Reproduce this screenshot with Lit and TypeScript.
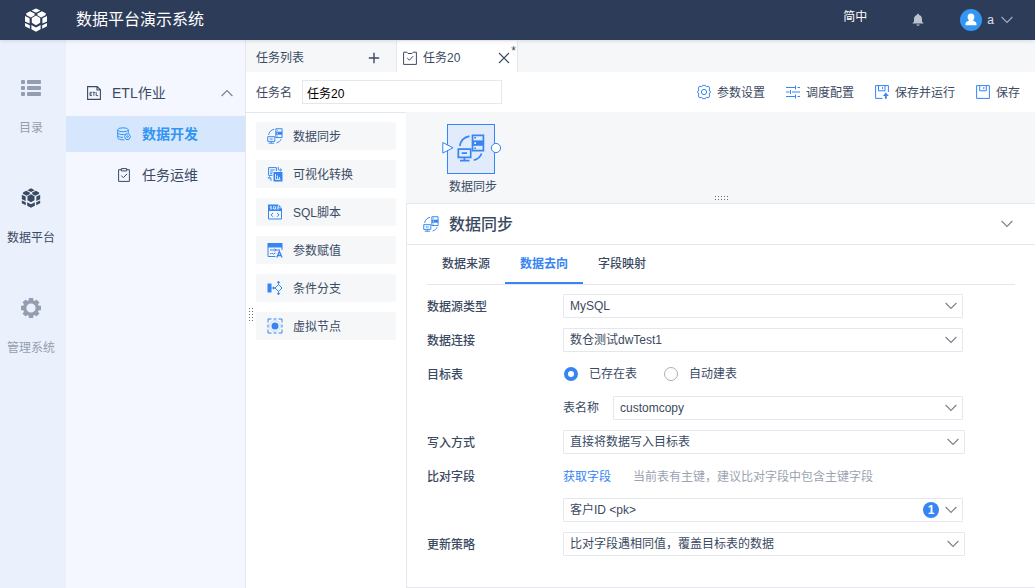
import { LitElement, html, css, svg, nothing, TemplateResult } from "lit";
import { customElement, property, state } from "lit/decorators.js";
import { classMap } from "lit/directives/class-map.js";

type Shape = { box: string; body: TemplateResult };

const cube = svg`
  <g fill="currentColor">
    <path d="M12 .4 16.4 2.6 12 4.8 7.6 2.6z"/>
    <path d="M6 3.2 10.6 5.4 10.6 7.2 7 9.4 2.6 7.2 2 5.6z"/>
    <path d="M18 3.2 13.4 5.4 13.4 7.2 17 9.4 21.4 7.2 22 5.6z"/>
    <path d="M12 7.6 16.2 10v4.8L12 17.2 7.8 14.8V10z"/>
    <path d="M1 8 5.6 10.2v5.4L1 13.4z"/>
    <path d="M23 8 18.4 10.2v5.4L23 13.4z"/>
    <path d="M1 15 5.8 17.2v3.6L1 18.2z"/>
    <path d="M23 15 18.2 17.2v3.6l4.8-2.6z"/>
    <path d="M7.4 17 12 19.4 16.6 17v4.2L12 23.8 7.4 21.2z"/>
  </g>`;

const SHAPES: Record<string, Shape> = {
  cube: { box: "0 0 24 24", body: cube },
  list: {
    box: "0 0 20 20",
    body: svg`<g fill="currentColor">
      <rect x="0" y="2" width="4" height="4" rx="1"/><rect x="6" y="2" width="14" height="4" rx="1"/>
      <rect x="0" y="8" width="4" height="4" rx="1"/><rect x="6" y="8" width="14" height="4" rx="1"/>
      <rect x="0" y="14" width="4" height="4" rx="1"/><rect x="6" y="14" width="14" height="4" rx="1"/></g>`,
  },
  cog: {
    box: "0 0 20 20",
    body: svg`<circle cx="10" cy="10" r="6.3" fill="none" stroke="currentColor" stroke-width="3.4"/>
      <g stroke="currentColor" stroke-width="4.4">
        <path d="M10 0v3M10 17v3M0 10h3M17 10h3M3 3l2 2M15 15l2 2M17 3l-2 2M5 15l-2 2"/></g>`,
  },
  etl: {
    box: "0 0 14 14",
    body: svg`<path d="M.6.6h9.6l3.2 3.2v9.6H.6zM10 .8V4h3.2" fill="none" stroke="currentColor" stroke-width="1.1"/>
      <path d="M5 6.3H3v3.3h2M3 8h1.8M5.6 6.3h2.6M6.9 6.3v3.5M9.2 6.1v3.5h2" fill="none" stroke="currentColor" stroke-width=".9"/>`,
  },
  database: {
    box: "0 0 14 14",
    body: svg`<g fill="none" stroke="currentColor" stroke-width="1">
      <ellipse cx="6" cy="2.8" rx="5.3" ry="2"/>
      <path d="M.7 2.8v8c0 1.2 2.4 2 5.3 2h1.4M11.3 2.8v3M.7 5.6c0 1.2 2.4 2 5.3 2 1.2 0 2.3-.1 3-.4M.7 8.4c0 1.2 2.4 2 5.3 2"/>
      <path d="M9 6.9h3l1.5 2.8L12 12.5H9L7.5 9.700z"/><circle cx="10.500" cy="9.700" r=".9"/></g>`,
  },
  clipboard: {
    box: "0 0 14 14",
    body: svg`<g fill="none" stroke="currentColor" stroke-width="1">
      <path d="M4.200 1.700H1.600v11.700h10.800V1.700H9.800"/><path d="M4.300.6h5.400v2.300H4.300z"/><path d="m4.300 7.600 2.100 2.100 3.600-3.800"/></g>`,
  },
  tabcheck: {
    box: "0 0 14 14",
    body: svg`<g fill="none" stroke="currentColor" stroke-width="1">
      <path d="M.6 1.200h3.200L5 2.500h4l1.200-1.300h3.200v12.200H.6z"/><path d="m4.200 7 2.200 2.200 3.700-4"/></g>`,
  },
  bell: {
    box: "0 0 14 14",
    body: svg`<path d="M7 .8c.7 0 1 .5 1 1.100 2 .5 3 2.100 3 4.100v2.600l1.600 1.900H1.400L3 8.600V6c0-2 1-3.600 3-4.100C6 1.300 6.300.8 7 .8zM5.300 11.500h3.400c-.2.900-.9 1.300-1.700 1.300s-1.500-.4-1.700-1.300z" fill="currentColor"/>`,
  },
  avatar: {
    box: "0 0 22 22",
    body: svg`<circle cx="11" cy="11" r="11" fill="#3396f3"/>
      <path d="M11 4.500c2.200 0 3.400 1.500 3.400 3.500 0 1.300-.6 2.600-1.500 3.200 0 .8 3.600 1.200 3.600 3.500v1.500h-11v-1.500c0-2.300 3.600-2.700 3.600-3.500-.9-.6-1.500-1.900-1.500-3.200 0-2 1.200-3.500 3.400-3.500z" fill="#fff"/>`,
  },
  down: { box: "0 0 12 12", body: svg`<path d="m.6 3 5.400 5.400L11.400 3" fill="none" stroke="currentColor" stroke-width="1.100"/>` },
  up: { box: "0 0 12 12", body: svg`<path d="M.6 9 6 3.600 11.400 9" fill="none" stroke="currentColor" stroke-width="1.100"/>` },
  plus: { box: "0 0 12 12", body: svg`<path d="M6 .8v10.400M.8 6h10.400" fill="none" stroke="currentColor" stroke-width="1.400"/>` },
  close: { box: "0 0 12 12", body: svg`<path d="m1 1 10 10M11 1 1 11" fill="none" stroke="currentColor" stroke-width="1.100"/>` },
  gear: {
    box: "0 0 14 14",
    body: svg`<g fill="none" stroke="currentColor" stroke-width="1" stroke-linejoin="round">
      <path d="M4.600 1.500 6 .3h2l1.400 1.200 2.300-.1 1 1.700-.5 1.900L13.600 7l-1.400 2 .5 1.900-1 1.700-2.300-.1L8 13.700H6l-1.400-1.200-2.300.1-1-1.700.5-1.900L.4 7l1.400-2-.5-1.900 1-1.700z"/>
      <circle cx="7" cy="7" r="2.600"/></g>`,
  },
  sliders: {
    box: "0 0 14 14",
    body: svg`<path d="M0 2.500h9M11.500 2.500H14M9.500.500v4M0 7h3.500M6 7h8M4.500 5v4M0 11.500h9M11.500 11.500H14M9.500 9.500v4" fill="none" stroke="currentColor" stroke-width="1"/>`,
  },
  saverun: {
    box: "0 0 14 14",
    body: svg`<path d="M7.500 13.400H.6V.6h12.800V7M3.500.6v5.200h6.500V.6M7.600 2v2.200" fill="none" stroke="currentColor" stroke-width="1"/>
      <path d="M10.800 7.500 13.800 11h-2v2.800H9.900V11h-2z" fill="currentColor"/>`,
  },
  save: {
    box: "0 0 14 14",
    body: svg`<path d="M.6.6h12.800v12.800H.6zM3.700.6v5.200h6.600V.6M7.800 2v2.200" fill="none" stroke="currentColor" stroke-width="1"/>`,
  },
  sync: {
    box: "0 0 28 28",
    body: svg`<g fill="none" stroke="currentColor" stroke-width="1.700">
      <path d="M15.500 1.300h10.900v15.400H15.500z"/><path d="M1.300 15.200h12.400v8.200H1.300zM4.800 19.200h5.200M7.400 23.400v3M3 26.600h9.500"/>
      <path d="M2.800 12C3.600 7 7.500 3.200 12.500 2.200M24.600 19.500c-1.200 3.400-4 5.800-7.800 6.600"/></g>
      <path d="M15.500 6.400h10.900v5.400H15.500z" fill="currentColor"/>
      <path d="M17.300 3.800h1.700M17.300 14.200h1.700" stroke="currentColor" stroke-width="1.600"/><path d="M17.300 9.100h1.700" stroke="#fff" stroke-width="1.600"/>`,
  },
  transform: {
    box: "0 0 16 16",
    body: svg`<path d="M5.500 9.400H1.600V1.600h7.800v3.500M3.200 4h4.500M3.200 6h2.600M3.200 7.700h2" fill="none" stroke="currentColor" stroke-width="1"/>
      <path d="M6.500 6h9v9.500h-9z" fill="currentColor"/>
      <path d="M8.500 8v5.500h5M10.500 9.500v3.500M12.500 11v2" fill="none" stroke="#fff" stroke-width=".8"/>
      <path d="M11.300.800v3.200h3M13 2.600 14.800 4 13 5.500M4 15v-3.200H1.500M2.700 10.300 1.200 11.800l1.500 1.500" fill="none" stroke="currentColor" stroke-width=".9"/>`,
  },
  sql: {
    box: "0 0 16 16",
    body: svg`<path d="M1 .500h10.500L15 4v3H1z" fill="currentColor"/>
      <path d="M1.500 6v9h13V6" fill="none" stroke="currentColor" stroke-width="1"/>
      <path d="M5 2.600H3.200v1.200h1.600V5H3M6.500 2.600h2V5h-2zM8 4.500l1 1M10.300 2.300V5H12M11.500.500V3.800H15" fill="none" stroke="#fff" stroke-width=".7"/>
      <path d="m6 9-1.900 1.900L6 12.800M10 9l1.900 1.900L10 12.800" fill="none" stroke="currentColor" stroke-width="1"/>`,
  },
  assign: {
    box: "0 0 16 16",
    body: svg`<path d="M.500 1h15v4.500H.500z" fill="currentColor"/>
      <path d="M1 5v9.500h7.500M15 5v3M3 8h4M9 8h4M7 6.800 9.200 8 7 9.200M3 11.500h1.500M5 11l1.500 1.200L8.500 11" fill="none" stroke="currentColor" stroke-width="1"/>
      <path d="m9.800 15.500 2.600-6 2.600 6M10.700 13.500h3.400" fill="none" stroke="currentColor" stroke-width="1.300"/>`,
  },
  branch: {
    box: "0 0 16 16",
    body: svg`<path d="M.500 3.500h4v9h-4z" fill="currentColor"/>
      <path d="M4.500 8h3M11.500 4.500 15 8l-3.500 3.500L8 8zM11.500 4.500V2M11.500 11.500V14" fill="none" stroke="currentColor" stroke-width="1"/>
      <path d="M9.700 3 11.500.800 13.300 3zM9.700 13l1.800 2.200 1.800-2.200z M6 6.200 8.200 8 6 9.800z" fill="currentColor"/>`,
  },
  virtual: {
    box: "0 0 16 16",
    body: svg`<circle cx="8" cy="8" r="3.500" fill="currentColor"/>
      <path d="M1 4.500V1h3.500M6.500 1h3M11.500 1H15v3.500M15 6.500v3M15 11.500V15h-3.500M9.500 15h-3M4.500 15H1v-3.500M1 9.500v-3" fill="none" stroke="currentColor" stroke-width="1"/>
      <circle cx="8" cy="8" r="5.400" fill="none" stroke="currentColor" stroke-width=".6" opacity=".4"/>`,
  },
};

@customElement("ui-icon")
class UiIcon extends LitElement {
  @property() name = "";
  @property({ type: Number }) size = 14;

  static styles = css`
    :host { display: inline-flex; flex: none; }
    svg { display: block; overflow: visible; }
  `;

  render() {
    const s = SHAPES[this.name];
    return s
      ? html`<svg width=${this.size} height=${this.size} viewBox=${s.box} aria-hidden="true">${s.body}</svg>`
      : nothing;
  }
}

@customElement("ui-select")
class UiSelect extends LitElement {
  @property() label = "";
  @property() value = "";
  @property({ type: Number }) count = 0;

  static styles = css`
    :host { display: block; }
    .box { display: grid; align-items: center; }
    select, .marks { grid-area: 1 / 1; }
    select {
      appearance: none;
      box-sizing: border-box;
      width: 100%;
      height: 24px;
      margin: 0;
      padding: 0 50px 0 6px;
      border: 1px solid #e4e7ed;
      border-radius: 1px;
      background: #fff;
      color: #3b4a63;
      font: 12px/22px "Liberation Sans", "Noto Sans CJK SC", sans-serif;
    }
    .marks {
      justify-self: end;
      display: flex;
      align-items: center;
      gap: 6px;
      padding-right: 6px;
      color: #7d7f86;
      pointer-events: none;
    }
    .count {
      width: 16px;
      height: 16px;
      border-radius: 50%;
      background: #3685f2;
      color: #fff;
      font: bold 12px/16px "Liberation Sans", sans-serif;
      text-align: center;
    }
  `;

  render() {
    return html`<div class="box">
      <select aria-label=${this.label}><option>${this.value}</option></select>
      <span class="marks">
        ${this.count ? html`<span class="count">${this.count}</span>` : nothing}
        <ui-icon name="down" size="12"></ui-icon>
      </span>
    </div>`;
  }
}

const RAIL = [
  { icon: "list", text: "目录", on: false },
  { icon: "cube", text: "数据平台", on: true },
  { icon: "cog", text: "管理系统", on: false },
];
const ACTIONS = [
  { icon: "gear", text: "参数设置" },
  { icon: "sliders", text: "调度配置" },
  { icon: "saverun", text: "保存并运行" },
  { icon: "save", text: "保存" },
];
const PALETTE = [
  { icon: "sync", text: "数据同步" },
  { icon: "transform", text: "可视化转换" },
  { icon: "sql", text: "SQL脚本" },
  { icon: "assign", text: "参数赋值" },
  { icon: "branch", text: "条件分支" },
  { icon: "virtual", text: "虚拟节点" },
];
const TABS = ["数据来源", "数据去向", "字段映射"];

@customElement("app-root")
class AppRoot extends LitElement {
  @state() private tab = 1;

  static styles = css`
    :host {
      display: flex;
      flex-direction: column;
      min-height: 100vh;
      background: #fff;
      color: #3b4a63;
      font: 12px/20px "Liberation Sans", "Noto Sans CJK SC", sans-serif;
    }
    * { box-sizing: border-box; }
    button { margin: 0; padding: 0; border: 0; background: none; color: inherit; font: inherit; }
    a { color: inherit; text-decoration: none; }
    h1, h2 { margin: 0; font-size: 16px; font-weight: 500; }

    .top {
      display: flex;
      align-items: center;
      height: 40px;
      padding: 0 22px 0 24px;
      background: #2d3d59;
      color: #fff;
      box-shadow: 0 1px 4px rgba(0, 21, 41, 0.12);
      z-index: 1;
    }
    .top h1 { flex: 1; margin-left: 28px; font-weight: 400; }
    .lang { align-self: flex-start; margin-top: 7px; }
    .bell { display: flex; margin: 0 35px 0 44px; color: #bdc3cd; }
    .user { display: flex; align-items: center; gap: 5px; color: #dfe3e9; }
    .user .arrow { display: flex; margin-left: 2px; color: #a3acba; }

    .body { flex: 1; display: flex; }
    .rail {
      flex: none;
      display: flex;
      flex-direction: column;
      gap: 50px;
      width: 66px;
      padding: 38px 4px 0 0;
      background: #eaf1fd;
      color: #959eb0;
    }
    .rail a { display: flex; flex-direction: column; align-items: center; gap: 20px; }
    .rail .on { color: #3b4a63; }

    .side {
      flex: none;
      display: flex;
      flex-direction: column;
      gap: 5px;
      width: 180px;
      padding-top: 35px;
      border-right: 1px solid #e4e7ed;
      background: #f4f7ff;
      font-size: 14px;
    }
    .side button, .side a {
      display: flex;
      align-items: center;
      gap: 11px;
      height: 36px;
      padding: 0 12px 0 21px;
      text-align: left;
    }
    .side button span { flex: 1; }
    .side a { padding-left: 51px; }
    .side .on { background: #d6e7fd; color: #3396f3; font-weight: 700; }
    .arrow { color: #7d7f86; }

    .main { flex: 1; min-width: 0; display: flex; flex-direction: column; }
    .strip { display: flex; align-items: stretch; height: 32px; padding-top: 1px; background: #f5f7f9; }
    .lists {
      display: flex;
      justify-content: space-between;
      align-items: center;
      width: 151px;
      padding: 2px 16px 0 10px;
      border-right: 1px solid #e4e7ed;
    }
    .lists button, .open button { display: flex; }
    .open {
      position: relative;
      display: flex;
      align-items: center;
      gap: 6px;
      width: 121px;
      padding: 2px 7px 0 6px;
      border-right: 1px solid #e4e7ed;
      background: #fff;
    }
    .open span { flex: 1; }
    .open .dirty { position: absolute; top: 2px; right: 1px; line-height: 16px; font-style: normal; }

    .tools { display: flex; align-items: center; gap: 21px; height: 40px; padding: 0 15px 0 10px; }
    .name { flex: 1; display: flex; align-items: center; gap: 10px; }
    .name input {
      width: 200px;
      height: 24px;
      padding: 0 4px;
      border: 1px solid #e4e7ed;
      background: #fff;
      color: #000;
      font: inherit;
    }
    .tools button { display: flex; align-items: center; gap: 6px; }
    .text { padding-top: 2px; }
    .blue { color: #3685f2; }

    .work { flex: 1; display: flex; }
    .palette {
      position: relative;
      flex: none;
      display: flex;
      flex-direction: column;
      gap: 10px;
      width: 160px;
      padding: 9px 10px;
      border-top: 1px solid #e4e7ed;
    }
    .palette button {
      display: flex;
      align-items: center;
      gap: 10px;
      height: 28px;
      padding-left: 11px;
      border-radius: 2px;
      background: #f5f7f9;
    }
    .grip { position: absolute; fill: #5f6b83; }
    .palette .grip { left: 3px; top: 195px; }

    .right { flex: 1; min-width: 0; display: flex; flex-direction: column; }
    .canvas { position: relative; height: 91px; background: #f5f7f9; }
    .canvas .grip { left: 50%; bottom: 2px; margin-left: -6px; }
    .node { position: absolute; left: 35px; top: 11px; width: 64px; text-align: center; }
    .node svg { display: block; margin-left: 1px; overflow: visible; }
    .node .glyph { position: absolute; left: 16px; top: 11px; }
    .node p { margin: 2px 0 0; }

    .panel {
      flex: 1;
      display: flex;
      flex-direction: column;
      border: 1px solid #e4e7ed;
      border-right: 0;
    }
    .head {
      display: flex;
      align-items: center;
      gap: 10px;
      height: 41px;
      padding: 0 22px 0 16px;
      border-bottom: 1px solid #e4e7ed;
    }
    .head h2 { flex: 1; padding-top: 2px; }
    .head button { display: flex; }
    .tabs { display: flex; height: 40px; margin: 0 20px; border-bottom: 1px solid #e4e7ed; }
    .tabs button {
      height: 39px;
      padding: 1px 15px 0;
      border-bottom: 2px solid transparent;
      font-weight: 500;
    }
    .tabs .on { border-color: #3685f2; color: #3685f2; font-weight: 700; }

    .form {
      display: grid;
      grid-template-columns: 136px minmax(0, 402px);
      grid-auto-rows: 24px;
      row-gap: 10px;
      padding: 9px 20px 30px;
      line-height: 24px;
    }
    .form .title { font-weight: 500; line-height: 26px; }
    .narrow { padding-right: 2px; }
    .pair { grid-column: 2; display: flex; gap: 14px; }
    .pair ui-select { flex: 1; }
    .radios { display: flex; gap: 26px; }
    .radios label { display: flex; align-items: center; gap: 10px; }
    input[type="radio"] {
      appearance: none;
      width: 14px;
      height: 14px;
      margin: 0 1px;
      border: 1px solid #a9b0bc;
      border-radius: 50%;
      background: #fff;
    }
    input[type="radio"]:checked { border: 4px solid #3685f2; }
    .hint { display: flex; gap: 22px; color: #9ba3b2; line-height: 26px; }
  `;

  render() {
    return html`
      <header class="top">
        <ui-icon name="cube" size="24"></ui-icon>
        <h1>数据平台演示系统</h1>
        <button class="lang">简中</button>
        <button class="bell" aria-label="通知"><ui-icon name="bell"></ui-icon></button>
        <button class="user">
          <ui-icon name="avatar" size="22"></ui-icon>a
          <span class="arrow"><ui-icon name="down" size="12"></ui-icon></span>
        </button>
      </header>
      <div class="body">
        <nav class="rail">
          ${RAIL.map((r) => html`<a href="#" class=${classMap({ on: r.on })}>
            <ui-icon name=${r.icon} size="20"></ui-icon>${r.text}</a>`)}
        </nav>
        <nav class="side">
          <button><ui-icon name="etl"></ui-icon><span>ETL作业</span>
            <ui-icon class="arrow" name="up" size="12"></ui-icon></button>
          <a href="#" class="on"><ui-icon name="database"></ui-icon>数据开发</a>
          <a href="#"><ui-icon name="clipboard"></ui-icon>任务运维</a>
        </nav>
        <main class="main">
          <div class="strip">
            <div class="lists">任务列表
              <button aria-label="新建"><ui-icon name="plus" size="12"></ui-icon></button></div>
            <div class="open"><ui-icon name="tabcheck"></ui-icon><span>任务20</span>
              <button aria-label="关闭"><ui-icon name="close" size="12"></ui-icon></button>
              <i class="dirty">*</i></div>
          </div>
          <div class="tools">
            <div class="name"><label class="text" for="task">任务名</label><input id="task" type="text" value="任务20" /></div>
            ${ACTIONS.map((a) => html`<button><ui-icon class="blue" name=${a.icon}></ui-icon><span class="text">${a.text}</span></button>`)}
          </div>
          <div class="work">
            <div class="palette">
              ${PALETTE.map((p) => html`<button><ui-icon class="blue" name=${p.icon} size="16"></ui-icon><span class="text">${p.text}</span></button>`)}
              ${this.grip(2, 5)}
            </div>
            <div class="right">
              <div class="canvas">
                ${this.node()} ${this.grip(5, 2)}
              </div>
              ${this.panel()}
            </div>
          </div>
        </main>
      </div>
    `;
  }

  private grip(cols: number, rows: number) {
    const dots = Array.from({ length: cols * rows }, (_, i) => [(i % cols) * 3, Math.floor(i / cols) * 3]);
    return html`<svg class="grip" width=${cols * 3 - 1} height=${rows * 3 - 1} aria-hidden="true">
      ${dots.map(([x, y]) => svg`<rect x=${x} y=${y} width="1" height="1"/>`)}</svg>`;
  }

  private node() {
    return html`<div class="node">
      <svg width="60" height="52" viewBox="0 0 60 52" fill="#fff" stroke="#3685f2" aria-hidden="true">
        <rect x="5.500" y="1.500" width="47" height="49" fill="#e1ebfb"/>
        <path d="M.8 19.500v10.500L11 24.800z"/><circle cx="54" cy="25" r="4.600"/>
      </svg>
      <ui-icon class="glyph blue" name="sync" size="28"></ui-icon>
      <p>数据同步</p>
    </div>`;
  }

  private panel() {
    return html`<section class="panel">
      <div class="head">
        <ui-icon class="blue" name="sync" size="16"></ui-icon>
        <h2>数据同步</h2>
        <button class="arrow" aria-label="收起"><ui-icon name="down" size="12"></ui-icon></button>
      </div>
      <div class="tabs" role="tablist">
        ${TABS.map((t, i) => html`<button role="tab" aria-selected=${i === this.tab}
          class=${classMap({ on: i === this.tab })} @click=${() => (this.tab = i)}>${t}</button>`)}
      </div>
      <div class="form">
        <span class="title">数据源类型</span>
        <ui-select class="narrow" label="数据源类型" value="MySQL"></ui-select>
        <span class="title">数据连接</span>
        <ui-select class="narrow" label="数据连接" value="数仓测试dwTest1"></ui-select>
        <span class="title">目标表</span>
        <div class="radios">
          <label><input type="radio" name="target" checked />已存在表</label>
          <label><input type="radio" name="target" />自动建表</label>
        </div>
        <div class="pair narrow"><span>表名称</span><ui-select label="表名称" value="customcopy"></ui-select></div>
        <span class="title">写入方式</span>
        <ui-select label="写入方式" value="直接将数据写入目标表"></ui-select>
        <span class="title">比对字段</span>
        <div class="hint"><a class="blue" href="#">获取字段</a><span>当前表有主键，建议比对字段中包含主键字段</span></div>
        <div class="pair narrow"><ui-select label="比对字段" value="客户ID &lt;pk&gt;" count="1"></ui-select></div>
        <span class="title">更新策略</span>
        <ui-select label="更新策略" value="比对字段遇相同值，覆盖目标表的数据"></ui-select>
      </div>
    </section>`;
  }
}
